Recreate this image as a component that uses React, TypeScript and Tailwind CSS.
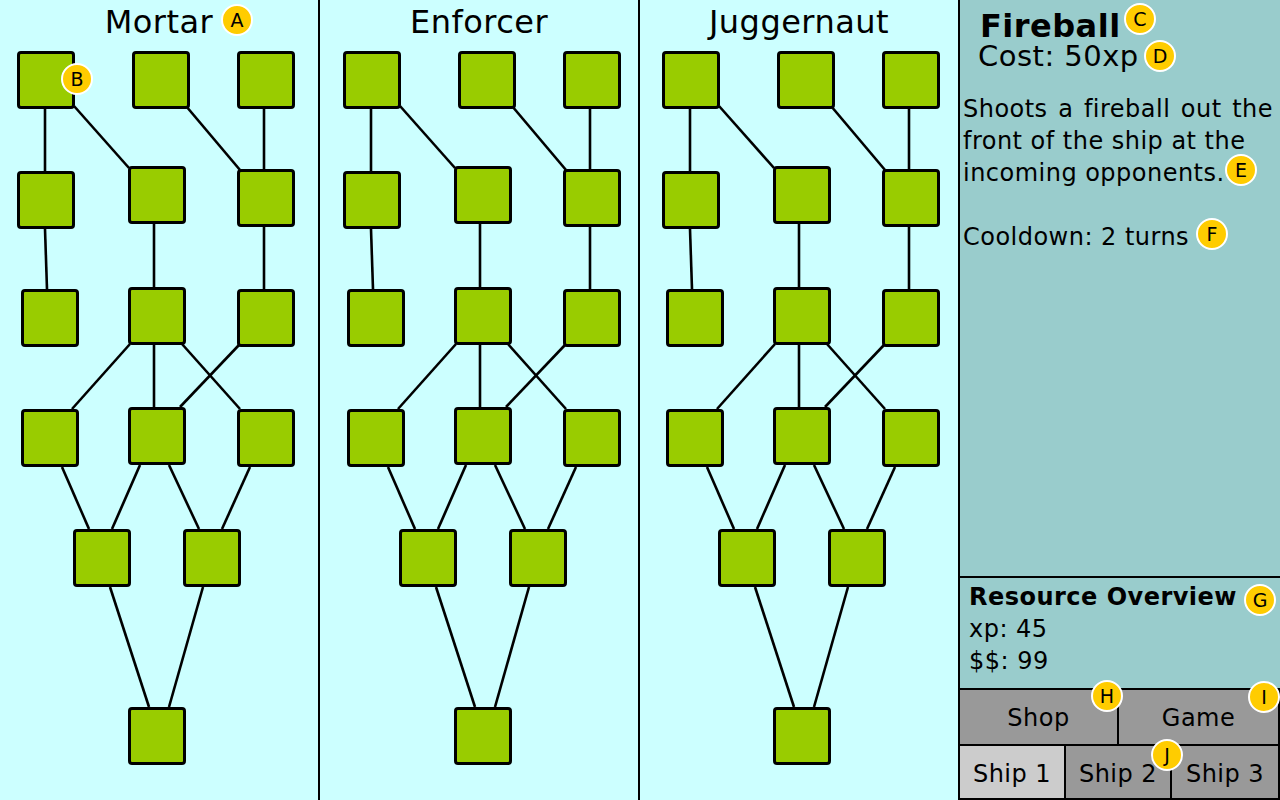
import React from 'react';

type Pt = [number, number];

const NODES: Pt[] = [
	[17, 51], [132, 51], [237, 51],
	[17, 171], [128, 166], [237, 169],
	[21, 289], [128, 287], [237, 289],
	[21, 409], [128, 407], [237, 409],
	[73, 529], [183, 529],
	[128, 707],
];

const EDGES: [number, number, number, number][] = [
	[45, 109, 45, 171],
	[74, 106, 129, 168],
	[186, 106, 240, 170],
	[264, 109, 264, 169],
	[45, 229, 47, 289],
	[154, 224, 154, 287],
	[264, 227, 264, 289],
	[130, 344, 72, 409],
	[154, 345, 154, 407],
	[182, 344, 240, 409],
	[239, 345, 180, 407],
	[62, 467, 89, 529],
	[140, 465, 112, 529],
	[169, 465, 199, 529],
	[250, 467, 222, 529],
	[110, 587, 149, 707],
	[203, 587, 169, 707],
];

function Badge({ label, x, y }: { label: string; x: number; y: number }) {
	return (
		<div
			className="absolute z-20 flex h-8 w-8 items-center justify-center rounded-full border-2 border-white bg-[#ffcc00] text-[19px] leading-none tracking-normal text-black"
			style={{ left: x - 16, top: y - 16 }}
		>
			{label}
		</div>
	);
}

function TreeColumn({ title, shift }: { title: string; shift: number }) {
	return (
		<div className="relative h-full w-[320px] shrink-0 border-r-2 border-black bg-[#ccffff]">
			<div className="pt-[6px] text-center text-[32px] leading-none">{title}</div>
			<div className="absolute inset-0">
				<svg className="absolute inset-0" width="318" height="800">
					{EDGES.map(([x1, y1, x2, y2], i) => (
						<line key={i} x1={x1 + shift} y1={y1} x2={x2 + shift} y2={y2} stroke="#000" strokeWidth="2.6" />
					))}
				</svg>
				{NODES.map(([x, y], i) => (
					<div
						key={i}
						className="absolute h-[58px] w-[58px] rounded-[4px] border-[3px] border-black bg-[#99cc00]"
						style={{ left: x + shift, top: y }}
					/>
				))}
			</div>
		</div>
	);
}

export default function App() {
	return (
		<div
			className="relative flex h-[800px] w-[1280px] overflow-hidden tracking-[0.03em] text-black"
			style={{ fontFamily: '"DejaVu Sans", Verdana, sans-serif' }}
		>
			<TreeColumn title="Mortar" shift={0} />
			<TreeColumn title="Enforcer" shift={6} />
			<TreeColumn title="Juggernaut" shift={5} />

			<div className="flex h-full w-[320px] shrink-0 flex-col bg-[#99cccc]">
				<div className="flex-1">
					<div className="pl-[20px] pt-[10px] text-[32px] font-bold leading-none">Fireball</div>
					<div className="pl-[18px] text-[29px] leading-none">Cost: 50xp</div>
					<div className="mt-[22px] pl-[3px] pr-[7px] text-[24px] leading-[32px]">
						<div className="text-justify [text-align-last:justify]">Shoots a fireball out the</div>
						<div>front of the ship at the</div>
						<div>incoming opponents.</div>
					</div>
					<p className="mt-[32px] pl-[3px] text-[24px] leading-[32px]">Cooldown: 2 turns</p>
				</div>

				<div className="h-[112px] border-t-2 border-black px-[9px] pt-[3px] text-[24px] leading-[32px]">
					<div className="font-bold">Resource Overview</div>
					<div>xp: 45</div>
					<div>$$: 99</div>
				</div>

				<div className="grid h-[56px] grid-cols-2 border-t-2 border-r-2 border-black bg-[#999999] text-[24px]">
					<button className="flex items-center justify-center border-r-2 border-black pt-[2px]">Shop</button>
					<button className="flex items-center justify-center pt-[2px]">Game</button>
				</div>

				<div className="grid h-[56px] grid-cols-3 border-y-2 border-r-2 border-black text-[24px]">
					<button className="flex items-center justify-center border-r-2 border-black bg-[#cccccc] pt-[3px]">Ship 1</button>
					<button className="flex items-center justify-center border-r-2 border-black bg-[#999999] pt-[3px]">Ship 2</button>
					<button className="flex items-center justify-center bg-[#999999] pt-[3px]">Ship 3</button>
				</div>
			</div>

			<Badge label="A" x={237} y={20} />
			<Badge label="B" x={77} y={79} />
			<Badge label="C" x={1140} y={19} />
			<Badge label="D" x={1160} y={56} />
			<Badge label="E" x={1241} y={170} />
			<Badge label="F" x={1212} y={234} />
			<Badge label="G" x={1260} y={600} />
			<Badge label="H" x={1107} y={696} />
			<Badge label="I" x={1264} y={697} />
			<Badge label="J" x={1167} y={755} />
		</div>
	);
}
